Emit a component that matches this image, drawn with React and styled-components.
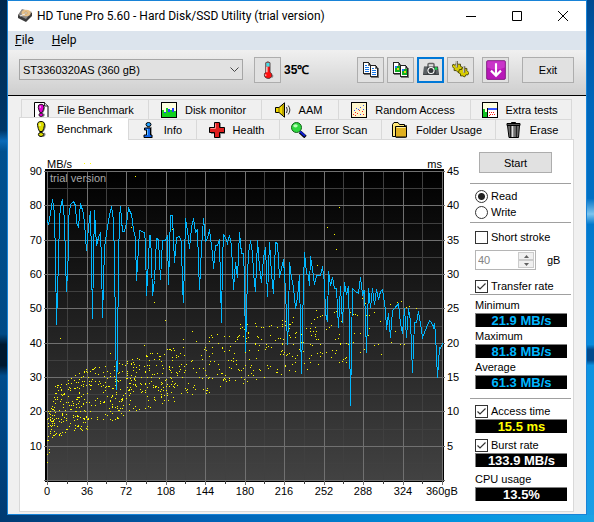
import React, { Fragment, useState } from 'react';
import styled, { createGlobalStyle } from 'styled-components';

const GlobalStyle = createGlobalStyle`
    * {
        box-sizing: border-box;
    }

    body {
        margin: 0;
        font-family: 'Liberation Sans', Arial, sans-serif;
        font-size: 11px;
        color: #000000;
    }

    button, input, select {
        font: inherit;
        color: inherit;
    }
`;

const Desktop = styled.div`
    min-height: 100vh;
    padding: 0 7px 7px;
    background:
        linear-gradient(90deg, #003a72, #0061b4 35%, #0091dd 75%, #1aa4e6) bottom / 100% 7px no-repeat,
        linear-gradient(#00284e, #003768 25%, #0a6ab8 27%, #00508f 29%, #004a86 64%, #00182f 66%, #00182f 70%, #004c8c 72%, #003a72) left / 7px 100% no-repeat,
        linear-gradient(#004a90, #0058a8 8%, #0067bb 20%, #0070c4 38%, #7cc4ee 41%, #0078cc 43%, #0a8bdc 66%, #024a8c 67%, #024a8c 69%, #0c92e0 70%, #1b9fe6) right / 7px 100% no-repeat,
        #005ba8;
`;

const Window = styled.main`
    border: 1px solid #1883d7;
    background: #f0f0f0;
    padding-bottom: 2px;
`;

const TitleBar = styled.header`
    display: flex;
    align-items: center;
    height: 30px;
    padding-left: 9px;
    background: #ffffff;
`;

const Title = styled.h1`
    flex: 1;
    margin: 0 0 0 4px;
    font-family: Roboto, 'Open Sans', sans-serif;
    font-size: 12px;
    font-weight: 400;
    white-space: nowrap;
`;

const CaptionButton = styled.button`
    display: flex;
    align-items: center;
    justify-content: center;
    width: 46px;
    height: 30px;
    padding: 0;
    border: none;
    background: transparent;
`;

const MenuBar = styled.nav`
    display: flex;
    gap: 18px;
    height: 19px;
    padding: 0 7px;
    background: #dce4ed;
`;

const MenuItem = styled.button`
    padding: 0;
    border: none;
    background: none;
    font-family: Roboto, 'Open Sans', sans-serif;
    font-size: 12px;
    line-height: 19px;
`;

const Toolbar = styled.div`
    display: flex;
    align-items: center;
    gap: 3px;
    height: 46px;
    padding: 0 12px 6px 11px;
    border-bottom: 1px solid #000000;
    background: linear-gradient(#f0f0f0, #cecece);
`;

const DriveBox = styled.div`
    position: relative;
    flex: 0 1 224px;
    margin-right: 8px;
`;

const DriveSelect = styled.select`
    appearance: none;
    display: block;
    width: 100%;
    height: 21px;
    padding: 0 20px 0 3px;
    border: 1px solid #a6a6a6;
    border-radius: 0;
    background: #e1e1e1;
`;

const DriveArrow = styled.svg`
    position: absolute;
    right: 4px;
    top: 8px;
    pointer-events: none;
`;

const ToolButton = styled.button`
    display: flex;
    align-items: center;
    justify-content: center;
    width: ${props => props.$wide ? '52px' : '27px'};
    height: 26px;
    padding: 0;
    margin-left: ${props => props.$space || '0'};
    border: ${props => props.$active ? '2px solid #0078d7' : '1px solid #adadad'};
    background: #e1e1e1;
`;

const Temperature = styled.span`
    flex: 1;
    font-size: 12px;
    font-weight: 700;
`;

const Content = styled.div`
    padding: 3px 12px 0 11px;
`;

const TabRow = styled.div`
    display: grid;
    grid-template-columns: ${props => props.$columns};
    height: 20px;
    margin: ${props => props.$inset ? '0 2px' : '0 2px 0 0'};
    border-right: 1px solid #d9d9d9;
`;

const Tab = styled.button`
    display: flex;
    align-items: center;
    justify-content: center;
    gap: 8px;
    height: ${props => props.$active ? '23px' : '20px'};
    margin-top: ${props => props.$active ? '-2px' : '0'};
    padding: 0 3px 0 0;
    border: solid #d9d9d9;
    border-width: 1px 0 0 1px;
    background: ${props => props.$active ? '#ffffff' : '#f0f0f0'};
    z-index: ${props => props.$active ? 1 : 0};
    white-space: nowrap;
`;

const Panel = styled.section`
    display: flex;
    border: 1px solid #d9d9d9;
    background: #ffffff;
`;

const ChartArea = styled.div`
    flex: 1;
    min-width: 0;
    padding-top: 12px;
`;

const Chart = styled.svg`
    display: block;
    width: 100%;
    height: auto;
    font-size: 11px;
`;

const Sidebar = styled.aside`
    width: 103px;
    padding: 12px 2px 10px 0;
`;

const Group = styled.div`
    display: flex;
    flex-direction: column;
    gap: ${props => props.$gap || '0'};
    padding: ${props => props.$pad} 4px ${props => props.$end || '0'} 5px;
    border-top: 1px solid #a0a0a0;
`;

const StartButton = styled.button`
    display: block;
    width: 73px;
    height: 21px;
    margin: 0 0 10px 9px;
    padding: 0;
    border: 1px solid #adadad;
    background: #e1e1e1;
`;

const Option = styled.label`
    display: flex;
    align-items: center;
    gap: 3px;
    height: 16px;
    white-space: nowrap;
`;

const Radio = styled.input`
    appearance: none;
    width: 13px;
    height: 13px;
    margin: 0;
    border: 1px solid #333333;
    border-radius: 50%;
    background: #ffffff;

    &:checked {
        background: radial-gradient(#222222 3px, #ffffff 4px);
    }
`;

const Check = styled.input`
    appearance: none;
    width: 13px;
    height: 13px;
    margin: 0;
    border: 1px solid #333333;
    background: #ffffff;

    &:checked {
        background: #ffffff url("data:image/svg+xml,%3Csvg xmlns='http://www.w3.org/2000/svg' width='11' height='11'%3E%3Cpath d='M1.500 5.500L4 8L9.500 2.500' fill='none' stroke='%23333' stroke-width='1.200'/%3E%3C/svg%3E") center no-repeat;
    }
`;

const SizeRow = styled.div`
    display: flex;
    align-items: center;
    gap: 11px;
    height: 20px;
    margin: 5px 0 8px;
`;

const Spinner = styled.div`
    display: flex;
    width: 61px;
    height: 20px;
    padding: 1px;
    border: 1px solid #b5b5b5;
`;

const SizeInput = styled.input`
    flex: 1;
    min-width: 0;
    padding: 0 1px;
    border: none;
    background: #ffffff;
    color: #838383;
`;

const Arrows = styled.div`
    display: grid;
    grid-template-rows: 1fr 1fr;
    width: 16px;
`;

const ArrowButton = styled.button`
    display: grid;
    place-items: center;
    padding: 0;
    border: 1px solid #cccccc;
    background: #f0f0f0;
`;

const Caption = styled.div`
    height: 16px;
    line-height: 16px;
`;

const Value = styled.output`
    display: block;
    height: 14px;
    background: #000000;
    border: solid #808080;
    border-width: 1px 0 0 1px;
    color: ${props => props.$color};
    font-size: 13px;
    font-weight: 700;
    line-height: 13px;
    text-align: center;
`;

/* icons */

const Icon = ({ children, size = 16, crisp = true }) => (
    <svg width={size} height={size} viewBox='0 0 16 16' shapeRendering={crisp ? 'crispEdges' : 'auto'} aria-hidden='true'>
        {children}
    </svg>
);

const DiskIcon = () => (
    <Icon crisp={false}>
        <path d='M5 2L15 5V8L9 14L1 10V7Z' fill='#3b3b3b' />
        <path d='M5 1L15 4L9 11L1 7Z' fill='#8e8a86' />
        <ellipse cx='9' cy='5' rx='4.5' ry='3.2' fill='#e8c188' />
        <ellipse cx='9' cy='5' rx='1.3' ry='1' fill='#ffffff' stroke='#8b6a3d' strokeWidth='.5' />
        <path d='M3 8L8 6' stroke='#eeeeee' />
    </Icon>
);

const ThermoIcon = () => (
    <Icon size={18} crisp={false}>
        <path d='M8 13l4 2 1-2-3-2z' fill='#999999' />
        <path d='M6 1.5Q8 0 9.800 1.500V10Q12 11 11.500 13.500Q10 16 8 15.500Q4.500 15 4.800 12Q5 10.500 6 10Z' fill='#ff1010' stroke='#333333' strokeWidth='.7' />
        <path d='M6.400 1.500H9.400V5H6.400Z' fill='#40e0e8' />
        <path d='M7 5V10M6 12v1' stroke='#ffffff' strokeWidth='1' />
    </Icon>
);

const Sheet = ({ x, y, children }) => (
    <g transform={`translate(${x} ${y})`}>
        <path d='M1 1H6L9 4V13H1Z' fill='#777777' />
        <path d='M.5 .5H5.500L7.500 3.500V11.500H.5Z' fill='#ffffff' stroke='#222222' />
        <path d='M5 1V3H7' fill='none' stroke='#222222' strokeWidth='.6' />
        {children}
    </g>
);

const CopyIcon = ({ image }) => {
    const detail = image
        ? <Fragment><path d='M2 4H7V10H2Z' fill='#10b020' /><path d='M2 4H4V6H2Z' fill='#2070ff' /><path d='M4 6H6V8H4Z' fill='#e8d020' /></Fragment>
        : <path d='M2 3.500H4M2 5.500H6M2 7.500H6M2 9.500H6' stroke='#1878e8' />;
    return (
        <Icon>
            <Sheet x={0} y={0}>{detail}</Sheet>
            <Sheet x={7} y={3}>{detail}</Sheet>
        </Icon>
    );
};

const CameraIcon = () => (
    <Icon crisp={false}>
        <path d='M5 5V2.500Q5 1.500 6 1.500H10Q11 1.500 11 2.500V5' fill='none' stroke='#666666' strokeWidth='1.500' />
        <path d='M1 4.500H15L16 13H0Z' fill='#3c4043' />
        <path d='M1 5H4V12H1ZM13 8H15V12H13Z' fill='#5b6064' />
        <circle cx='8' cy='8.500' r='3.600' fill='#ffffff' />
        <circle cx='8' cy='8.500' r='2.500' fill='#34383b' />
        <circle cx='13' cy='6.500' r='1.500' fill='#20d050' />
    </Icon>
);

const GearsIcon = () => (
    <Icon size={17} crisp={false}>
        <g stroke='#3a3800' strokeWidth='.8' fill='#d8cc00'>
            <path d='M1 3L3 4L4 2L6 3L8 3L8 5L10 6L9 8L10 10L7 10L6 11L4 9L2 9L2 7L0 5Z' />
            <path d='M7 8L9 8L10 6L12 7L14 7L14 9L16 11L15 13L13 13L12 15L10 14L8 14L8 12L6 11Z' />
        </g>
        <path d='M4.500 0V6M11.500 5V11' stroke='#605c48' strokeWidth='2' />
        <path d='M4 0V6M11 5V11' stroke='#eeeeee' strokeWidth='.8' />
    </Icon>
);

const DownloadIcon = () => (
    <Icon size={20} crisp={false}>
        <rect x='.5' y='.5' width='15' height='15' rx='1' fill='#b818b8' stroke='#6f086f' strokeWidth='.6' />
        <path d='M1 1H15V6Q8 9 1 6Z' fill='#d348d3' opacity='.6' />
        <path d='M8 2.500V12M4 8.500L8 12.500L12 8.500' fill='none' stroke='#ffffff' strokeWidth='1.700' />
    </Icon>
);

const Exclamation = ({ color }) => (
    <g>
        <path d='M9 1.500Q13.500 3 11.500 7.500L10 10.500M10 15.500Q13 14 11 12' stroke='#888888' strokeWidth='1.500' fill='none' />
        <path d='M8 .5Q12 .5 11.400 4.500Q11 7.500 9.500 10.500H6.500Q5 7.500 4.600 4.500Q4 .5 8 .5Z' fill={color} stroke='#000000' />
        <ellipse cx='8' cy='13.500' rx='2.600' ry='2' fill={color} stroke='#000000' />
        <path d='M7 2.500V5' stroke='#ffffff' />
    </g>
);

const BenchmarkIcon = () => <Icon crisp={false}><Exclamation color='#dede00' /></Icon>;

const FileBenchmarkIcon = () => (
    <Icon crisp={false}>
        <path d='M1.500 .5H11.500L15 4V15.500H1.500Z' fill='#ffffff' stroke='#000000' />
        <path d='M11.500 .5V4H15' fill='#dddddd' stroke='#000000' strokeWidth='.8' />
        <g transform='translate(1.500 1.800) scale(.82)'><Exclamation color='#e000d0' /></g>
    </Icon>
);

const MonitorIcon = () => (
    <Icon>
        <path d='M0 0H16V16H0Z' fill='#000000' />
        <path d='M1 1H15V15H1Z' fill='#ffffe0' />
        <path d='M1 8H3V15H1ZM5 6H7V15H5ZM9 8H11V15H9ZM13 9H15V15H13Z' fill='#10d020' />
        <path d='M3 10H5V15H3ZM7 7H9V15H7ZM11 6H13V15H11Z' fill='#2040ff' />
        <path d='M3 11H5V15H3ZM7 10H9V15H7ZM11 10H13V15H11Z' fill='#10d020' />
    </Icon>
);

const SpeakerIcon = () => (
    <Icon crisp={false}>
        <path d='M.5 5.500H4L9.500 .8V15.200L4 10.500H.5Z' fill='#f0d800' stroke='#000000' />
        <path d='M4 5.500V10.500M8 3V13' stroke='#806c00' />
        <path d='M11.500 5Q13 8 11.500 11M13.200 3.500Q16.500 8 13.200 12.500' fill='none' stroke='#333333' />
    </Icon>
);

const RandomIcon = () => (
    <Icon>
        <path d='M0 0H16V16H0Z' fill='#000000' />
        <path d='M1 1H15V15H1Z' fill='#fff6cc' />
        <path d='M2 12h1v1h-1zM4 10h1v1h-1zM6 11h1v1h-1zM8 8h1v1h-1zM11 9h1v1h-1zM12 12h1v1h-1zM4 13h1v1h-1z' fill='#ff2020' />
        <path d='M3 8h1v1h-1zM5 6h1v1h-1zM9 5h1v1h-1zM12 3h1v1h-1zM7 7h1v1h-1zM12 7h1v1h-1zM9 12h1v1h-1z' fill='#3050ff' />
    </Icon>
);

const ExtraIcon = () => (
    <Icon>
        <path d='M0 0H16V16H0Z' fill='#000000' />
        <path d='M1 1H15V15H1Z' fill='#ffffe0' />
        <path d='M1 7H3V15H1ZM3 10H5V15H3Z' fill='#10c020' />
        <path d='M5 6H15V15H5Z' fill='#ffffff' stroke='#000000' />
        <path d='M6 6H15V8H6Z' fill='#3858ff' />
        <path d='M7 10h1v1h-1zM9 10h1v1h-1zM11 10h1v1h-1zM8 12h1v1h-1zM10 12h1v1h-1zM12 12h1v1h-1zM7 13h1v1h-1z' fill='#ff2020' />
    </Icon>
);

const InfoIcon = () => (
    <Icon crisp={false}>
        <path d='M7 4l5 1v9l1 2H6z' fill='#999999' />
        <ellipse cx='8.500' cy='2.500' rx='2.500' ry='2' fill='#20a0ff' stroke='#000000' />
        <path d='M4.500 6H10.500V13H12V15.500H4V13H6.500V8H4.500Z' fill='#1068f0' stroke='#000000' />
        <path d='M7.500 7V13' stroke='#60c0ff' />
    </Icon>
);

const HealthIcon = () => (
    <Icon crisp={false}>
        <path d='M6 1H12V6H16V12H12V16H7V12H2V6H6Z' fill='#888888' />
        <path d='M5.500 .5H10.500V5.500H15.500V10.500H10.500V15.500H5.500V10.500H.5V5.500H5.500Z' fill='#e02020' stroke='#000000' />
        <path d='M6.500 1.500V6.500H1.500' fill='none' stroke='#ff8888' />
    </Icon>
);

const ScanIcon = () => (
    <Icon crisp={false}>
        <path d='M9 10L14.500 15' stroke='#000000' strokeWidth='3.500' />
        <path d='M9 9.500L14 14' stroke='#1020d0' strokeWidth='2.200' />
        <circle cx='5.500' cy='5.500' r='5' fill='#30d840' stroke='#106018' />
        <ellipse cx='4.500' cy='3.800' rx='2.200' ry='1.600' fill='#b8ffb8' />
    </Icon>
);

const FolderIcon = () => (
    <Icon crisp={false}>
        <path d='M3 3H15V15L13 16H4Z' fill='#555555' />
        <path d='M.5 2.500L2 .5H6L7.500 2.500H12.500V14.500H.5Z' fill='#ffe878' stroke='#000000' />
        <path d='M3.500 4.500H14.500V15H3.500Z' fill='#e0b020' stroke='#000000' />
        <path d='M4.500 5.500H13.500' stroke='#fff0a0' />
    </Icon>
);

const EraseIcon = () => (
    <Icon crisp={false}>
        <path d='M1.500 3.500H13.500L12.500 15.500H3Z' fill='#707070' stroke='#000000' />
        <path d='M4.500 4V15M10.500 4V15' stroke='#222222' strokeWidth='1.200' />
        <path d='M6.500 4V15' stroke='#e0e0e0' strokeWidth='1.500' />
        <path d='M1 1.500H14V3.500H1ZM5.500 1.500V.5H9.500V1.500' fill='#555555' stroke='#000000' />
    </Icon>
);

/* chart data, measured from the top left corner of the plot */

const PLOT_W = 395;
const PLOT_H = 309;

const transfer = [
    [0, 49], [1, 53], [3, 42], [5, 28], [7, 42], [8, 89], [9, 153], [11, 89], [12, 47], [13, 36], [15, 28], [17, 49],
    [18, 89], [19, 120], [21, 79], [21, 47], [23, 33], [26, 30], [28, 34], [29, 51], [31, 56], [33, 32], [36, 42], [37, 52],
    [39, 79], [41, 56], [43, 40], [44, 89], [45, 147], [46, 89], [47, 39], [49, 74], [51, 66], [53, 61], [54, 89], [55, 146],
    [57, 76], [59, 62], [61, 49], [64, 35], [66, 49], [67, 89], [68, 159], [69, 218], [70, 185], [71, 89], [72, 47], [73, 35],
    [75, 60], [77, 60], [79, 52], [81, 37], [84, 43], [86, 58], [88, 66], [89, 109], [91, 76], [92, 59], [97, 61], [98, 72],
    [99, 124], [101, 89], [102, 64], [103, 64], [104, 89], [105, 124], [107, 109], [109, 67], [111, 68], [113, 108], [115, 69],
    [118, 69], [120, 64], [121, 113], [123, 44], [125, 44], [127, 91], [129, 66], [132, 65], [134, 71], [135, 116], [136, 131],
    [137, 89], [138, 47], [140, 59], [142, 77], [144, 56], [146, 47], [148, 61], [150, 58], [151, 92], [152, 118], [154, 76],
    [156, 47], [158, 70], [160, 67], [162, 58], [165, 82], [166, 97], [168, 74], [170, 74], [172, 68], [173, 112], [174, 151],
    [175, 89], [176, 63], [178, 66], [180, 72], [182, 64], [184, 74], [186, 118], [188, 91], [190, 106], [192, 61], [194, 82],
    [196, 82], [197, 106], [198, 180], [200, 104], [201, 82], [203, 69], [205, 81], [206, 102], [208, 120], [210, 69], [212, 96],
    [214, 111], [216, 86], [218, 76], [220, 125], [222, 71], [224, 102], [226, 122], [228, 71], [230, 72], [232, 106], [234, 97],
    [236, 88], [238, 119], [240, 173], [241, 149], [242, 91], [244, 106], [246, 116], [248, 137], [250, 126], [252, 104],
    [253, 159], [254, 202], [256, 112], [257, 81], [259, 102], [261, 104], [262, 114], [263, 85], [265, 97], [267, 113],
    [269, 104], [273, 104], [275, 95], [277, 112], [278, 142], [280, 150], [281, 100], [283, 114], [285, 106], [287, 117],
    [289, 117], [291, 156], [293, 115], [295, 151], [297, 111], [299, 123], [301, 115], [302, 159], [303, 234], [305, 117],
    [308, 120], [311, 122], [313, 106], [315, 123], [317, 119], [319, 181], [321, 117], [323, 136], [325, 117], [327, 133],
    [329, 118], [331, 128], [333, 120], [335, 118], [337, 132], [338, 139], [339, 158], [341, 142], [343, 166], [345, 139],
    [347, 137], [351, 132], [353, 152], [355, 162], [357, 137], [359, 166], [361, 137], [363, 149], [365, 201], [367, 151],
    [369, 151], [371, 140], [373, 152], [375, 166], [379, 156], [382, 149], [384, 151], [386, 156], [387, 152], [388, 162],
    [390, 206], [392, 176], [393, 177], [395, 172]
];

const strayHits = [
    [37, -8], [43, -8], [88, 5], [84, 56], [125, 58], [107, 131], [118, 149], [193, 153], [193, 157], [195, 156], [200, 153],
    [208, 152], [209, 155], [214, 156], [216, 156], [222, 155], [224, 154], [235, 149], [238, 150], [235, 155], [242, 153],
    [245, 151], [246, 146], [13, 167], [63, 182], [97, 174], [136, 168], [145, 160], [0, 291], [0, 283], [2, 281], [2, 278],
    [292, 36], [280, 56], [287, 63], [289, 78], [270, 94], [269, 139], [273, 145], [275, 144], [270, 146], [267, 148],
    [264, 152], [268, 156], [263, 157], [280, 150], [284, 154], [282, 156], [279, 158], [287, 141], [289, 140], [294, 150],
    [305, 130], [303, 141], [306, 143], [308, 143], [310, 144], [315, 127], [318, 132], [319, 144], [322, 144], [318, 146],
    [327, 141], [333, 150], [343, 133], [350, 131], [354, 130], [359, 136], [362, 135], [369, 137], [307, 162], [306, 171],
    [313, 162], [313, 181], [321, 164], [322, 157], [317, 178], [327, 174], [331, 173], [334, 183], [344, 171],
    [348, 160], [353, 173], [357, 173], [302, 157], [301, 173], [302, 177], [304, 188]
];

// [from, to, hits, top from, top to, bottom from, bottom to]
const bands = [
    [0, 8, 50, 240, 222, 272, 268],
    [8, 40, 150, 215, 196, 268, 258],
    [40, 80, 120, 196, 190, 258, 246],
    [80, 130, 160, 188, 175, 243, 229],
    [130, 200, 115, 172, 155, 229, 213],
    [200, 260, 85, 154, 152, 212, 198],
    [260, 300, 36, 160, 156, 194, 192]
];

const makeHits = () => {
    let seed = 7;
    const next = () => {
        seed = (seed * 16807) % 2147483647;
        return seed / 2147483647;
    };
    const hits = [];
    bands.forEach(([from, to, count, t0, t1, b0, b1]) => {
        for (let i = 0; i < count; i++) {
            const k = next();
            const top = t0 + (t1 - t0) * k;
            const bottom = b0 + (b1 - b0) * k;
            hits.push([Math.round(from + (to - from) * k), Math.round(top + (bottom - top) * next())]);
        }
    });
    return hits.concat(strayHits);
};

const hits = makeHits();
const steps = count => Array.from({ length: count }, (_, i) => i);
const gx = i => Math.round(i * PLOT_W / 20);
const gy = i => Math.round(i * PLOT_H / 18);

const BenchmarkChart = () => (
    <Chart viewBox='0 0 450 352' role='img' aria-label='Transfer rate and access time'>
        <defs>
            <linearGradient id='plot' x1='0' y1='0' x2='0' y2='1'>
                <stop offset='0' stopColor='#000000' />
                <stop offset='1' stopColor='#424242' />
            </linearGradient>
        </defs>
        <text x='27' y='16'>MB/s</text>
        <text x='422' y='16' textAnchor='end'>ms</text>
        <g transform='translate(27 19)' shapeRendering='crispEdges'>
            <rect x='-2' y='-2' width='399' height='313' fill='#000000' />
            <rect width={PLOT_W} height={PLOT_H} fill='url(#plot)' />
            {[1, 0].map(odd => (
                <g key={odd} fill={odd ? '#404040' : '#707070'}>
                    {steps(21).filter(i => i % 2 === odd).map(i => (
                        <rect key={i} x={gx(i)} y='0' width='1' height={odd ? PLOT_H + 4 : PLOT_H + 5} />
                    ))}
                    {steps(19).filter(i => i % 2 === odd).map(i => (
                        <rect key={i} x={odd ? 0 : -3} y={gy(i)} width={odd ? PLOT_W : PLOT_W + 6} height='1' />
                    ))}
                </g>
            ))}
            <g fill='#ffff00'>
                {hits.map(([x, y], i) => <rect key={i} x={x} y={y} width='1' height='1' />)}
            </g>
            <polyline points={transfer.map(p => p.join(',')).join(' ')} transform='translate(.5 .5)' fill='none' stroke='#00b7ff' strokeWidth='1' />
        </g>
        <g transform='translate(27 19)'>
            <text x='3' y='11' fill='#a8a8a8'>trial version</text>
            {steps(9).map(i => (
                <Fragment key={i}>
                    <text x='-5' y={gy(i * 2) + 4} textAnchor='end'>{90 - i * 10}</text>
                    <text x='400' y={gy(i * 2) + 4}>{45 - i * 5}</text>
                </Fragment>
            ))}
            {steps(10).map(i => (
                <text key={i} x={gx(i * 2)} y={PLOT_H + 15} textAnchor='middle'>{i * 36}</text>
            ))}
            <text x='379' y={PLOT_H + 15}>360gB</text>
        </g>
    </Chart>
);

const backTabs = [
    ['File Benchmark', FileBenchmarkIcon],
    ['Disk monitor', MonitorIcon],
    ['AAM', SpeakerIcon],
    ['Random Access', RandomIcon],
    ['Extra tests', ExtraIcon]
];

const frontTabs = [
    ['Benchmark', BenchmarkIcon],
    ['Info', InfoIcon],
    ['Health', HealthIcon],
    ['Error Scan', ScanIcon],
    ['Folder Usage', FolderIcon],
    ['Erase', EraseIcon]
];

const Tabs = ({ items, active, onPick, ...rest }) => (
    <TabRow role='tablist' {...rest}>
        {items.map(([name, TabIcon]) => (
            <Tab key={name} type='button' role='tab' aria-selected={active === name} $active={active === name} onClick={() => onPick(name)}>
                <TabIcon />
                {name}
            </Tab>
        ))}
    </TabRow>
);

const Metric = ({ name, value, color, checkable }) => (
    <div>
        {checkable
            ? <Option><Check type='checkbox' defaultChecked />{name}</Option>
            : <Caption>{name}</Caption>}
        <Value $color={color} aria-label={name}>{value}</Value>
    </div>
);

const App = () => {
    const [tab, setTab] = useState('Benchmark');

    return (
        <Desktop>
            <GlobalStyle />
            <Window>
                <TitleBar>
                    <DiskIcon />
                    <Title>HD Tune Pro 5.60 - Hard Disk/SSD Utility (trial version)</Title>
                    <CaptionButton aria-label='Minimize'>
                        <svg width='10' height='10'><path d='M0 5.500H10' stroke='#000000' /></svg>
                    </CaptionButton>
                    <CaptionButton aria-label='Maximize'>
                        <svg width='10' height='10'><path d='M.5 .5H9.500V9.500H.5Z' fill='none' stroke='#000000' /></svg>
                    </CaptionButton>
                    <CaptionButton aria-label='Close'>
                        <svg width='10' height='10'><path d='M0 0L10 10M10 0L0 10' stroke='#000000' /></svg>
                    </CaptionButton>
                </TitleBar>
                <MenuBar>
                    <MenuItem><u>F</u>ile</MenuItem>
                    <MenuItem><u>H</u>elp</MenuItem>
                </MenuBar>
                <Toolbar>
                    <DriveBox>
                        <DriveSelect aria-label='Drive'>
                            <option>ST3360320AS (360 gB)</option>
                        </DriveSelect>
                        <DriveArrow width='9' height='6'><path d='M.5 .5L4.500 4.500L8.500 .5' fill='none' stroke='#444444' /></DriveArrow>
                    </DriveBox>
                    <ToolButton aria-label='Temperature'><ThermoIcon /></ToolButton>
                    <Temperature>35℃</Temperature>
                    <ToolButton aria-label='Copy text'><CopyIcon /></ToolButton>
                    <ToolButton aria-label='Copy image'><CopyIcon image /></ToolButton>
                    <ToolButton aria-label='Save screenshot' $active><CameraIcon /></ToolButton>
                    <ToolButton aria-label='Options'><GearsIcon /></ToolButton>
                    <ToolButton aria-label='Minimize to tray' $space='5px'><DownloadIcon /></ToolButton>
                    <ToolButton $wide $space='10px'>Exit</ToolButton>
                </Toolbar>
                <Content>
                    <Tabs items={backTabs} active={tab} onPick={setTab} $inset $columns='127fr 113fr 77fr 132fr 101fr' />
                    <Tabs items={frontTabs} active={tab} onPick={setTab} $columns='109fr 68fr 83fr 102fr 114fr 76fr' />
                    <Panel>
                        <ChartArea>
                            <BenchmarkChart />
                        </ChartArea>
                        <Sidebar>
                            <StartButton type='button'>Start</StartButton>
                            <Group $pad='4px' $end='2px'>
                                <Option><Radio type='radio' name='mode' defaultChecked />Read</Option>
                                <Option><Radio type='radio' name='mode' />Write</Option>
                            </Group>
                            <Group $pad='6px'>
                                <Option><Check type='checkbox' />Short stroke</Option>
                                <SizeRow>
                                    <Spinner>
                                        <SizeInput aria-label='Short stroke size' defaultValue='40' disabled />
                                        <Arrows>
                                            <ArrowButton aria-label='Increase' disabled>
                                                <svg width='5' height='3'><path d='M0 3L2.500 0L5 3Z' fill='#606060' /></svg>
                                            </ArrowButton>
                                            <ArrowButton aria-label='Decrease' disabled>
                                                <svg width='5' height='3'><path d='M0 0L2.500 3L5 0Z' fill='#606060' /></svg>
                                            </ArrowButton>
                                        </Arrows>
                                    </Spinner>
                                    gB
                                </SizeRow>
                                <Option><Check type='checkbox' defaultChecked />Transfer rate</Option>
                            </Group>
                            <Group $pad='2px' $end='9px' $gap='1px'>
                                <Metric name='Minimum' value='21.9 MB/s' color='#00b7ff' />
                                <Metric name='Maximum' value='81.8 MB/s' color='#00b7ff' />
                                <Metric name='Average' value='61.3 MB/s' color='#00b7ff' />
                            </Group>
                            <Group $pad='4px' $gap='4px'>
                                <Metric name='Access time' value='15.5 ms' color='#ffff00' checkable />
                                <Metric name='Burst rate' value='133.9 MB/s' color='#ffffff' checkable />
                                <Metric name='CPU usage' value='13.5%' color='#ffffff' />
                            </Group>
                        </Sidebar>
                    </Panel>
                </Content>
            </Window>
        </Desktop>
    );
};

export default App;
